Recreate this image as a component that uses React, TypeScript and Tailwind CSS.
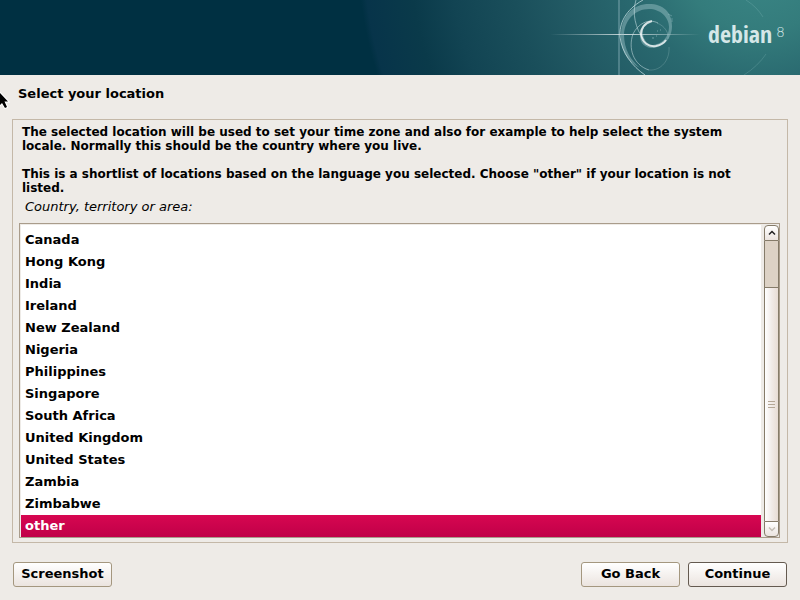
import { useState } from "react";

const locations = [
  "Canada",
  "Hong Kong",
  "India",
  "Ireland",
  "New Zealand",
  "Nigeria",
  "Philippines",
  "Singapore",
  "South Africa",
  "United Kingdom",
  "United States",
  "Zambia",
  "Zimbabwe",
  "other",
];

function Swirl() {
  return (
    <svg
      className="absolute top-0 right-0 h-full w-[500px]"
      viewBox="300 0 500 75"
      fill="none"
    >
      <defs>
        <linearGradient id="flare" x1="550" x2="700" y1="0" y2="0" gradientUnits="userSpaceOnUse">
          <stop offset="0" stopColor="#fff" stopOpacity="0" />
          <stop offset="0.5" stopColor="#fff" stopOpacity="0.75" />
          <stop offset="1" stopColor="#fff" stopOpacity="0" />
        </linearGradient>
      </defs>
      <path d="M619 0V75" stroke="#8fb5bd" strokeOpacity="0.4" strokeWidth="2" />
      <rect x="550" y="34" width="150" height="1" fill="url(#flare)" />
      <path
        d="M621 34C622 14 634 4 649 4C663 4 672 12 672 26C672 38 664 48 651 48C643 47 639 41 640 33C641 26 645 22 651 21C645 24 642 29 643 34C644 41 648 45 653 45C662 44 669 37 669 27C669 17 660 9 649 9C635 9 625 20 624 34C624 50 631 60 640 68C627 61 620 50 621 34Z"
        fill="#a0c6ca"
        fillOpacity="0.45"
      />
      <path d="M668 14l4 2M672 18v4" stroke="#a0c6ca" strokeOpacity="0.4" />
      <path d="M643 0C625 10 619 24 620 37C622 53 632 66 645 75" stroke="#c6dfe2" strokeOpacity="0.75" />
      <path d="M636 0C632 13 635 28 644 40" stroke="#c6dfe2" strokeOpacity="0.6" />
      <path d="M658 23C648 18 638 24 633 34C628 48 633 65 649 70" stroke="#c6dfe2" strokeOpacity="0.55" />
      <path d="M649 70C661 71 670 60 669 47" stroke="#c6dfe2" strokeOpacity="0.2" />
      <path d="M657 23C665 26 669 33 668 39" stroke="#c6dfe2" strokeOpacity="0.25" />
      <path d="M652 21C644 23 641 29 641 34C642 43 649 47 656 46C661 45 664 43 666 40" stroke="#fff" strokeOpacity="0.75" strokeWidth="2" />
      <path d="M652 38h2M657 31h1M660 30h1M656 36h1" stroke="#9fc4c8" strokeOpacity="0.6" />
      <path d="M746 0Q757 7 763 17M744 75Q758 66 766 54" stroke="#8fc4c4" strokeOpacity="0.25" />
    </svg>
  );
}

function Pointer() {
  return (
    <svg className="absolute top-[86px] left-0 h-7 w-6" viewBox="0 0 24 28" aria-hidden="true">
      <path
        d="M-1 6L8 15.5L4.500 15.500L7 21L5 22L2 17L-1 20Z"
        fill="#000"
        stroke="#fff"
        strokeWidth="2"
        paintOrder="stroke"
      />
    </svg>
  );
}

function ScrollBar() {
  return (
    <div className="mt-px flex w-[15px] flex-col">
      <button
        aria-label="Scroll up"
        className="flex h-4 items-center justify-center rounded-t-sm border border-[#857b69] bg-linear-to-b from-white to-[#ebe4df]"
      >
        <svg className="h-2 w-2" viewBox="0 0 8 8" fill="none">
          <path d="M1 5.5L4 2.5L7 5.5" stroke="#222" strokeWidth="1.5" />
        </svg>
      </button>
      <div className="h-[46px] border-x border-[#857b69] bg-[#ddd2c5]" />
      <div className="flex flex-1 flex-col items-center justify-center gap-[2px] border border-b-0 border-[#857b69] bg-linear-to-r from-white via-[#f1ebe8] to-[#e8dcd4]">
        <span className="h-px w-[7px] bg-[#b5a796]" />
        <span className="h-px w-[7px] bg-[#b5a796]" />
        <span className="h-px w-[7px] bg-[#b5a796]" />
      </div>
      <button
        aria-label="Scroll down"
        className="flex h-4 items-center justify-center rounded-b-sm border border-[#857b69] bg-linear-to-b from-white to-[#ebe4df]"
      >
        <svg className="h-2 w-2" viewBox="0 0 8 8" fill="none">
          <path d="M1 2.5L4 5.5L7 2.5" stroke="#c4bdb5" strokeWidth="1.5" />
        </svg>
      </button>
    </div>
  );
}

function App() {
  const [location, setLocation] = useState("other");

  return (
    <div className="relative flex min-h-screen flex-col bg-[#eeebe7] font-['DejaVu_Sans',sans-serif] text-[13px] leading-[14px] font-bold text-black">
      <header className="relative flex h-[75px] items-center justify-end overflow-hidden bg-[#003042] bg-[radial-gradient(circle_at_760px_-48px,#3c8988_0px,#347c7c_80px,#2a6a70_130px,#225a64_200px,#1a4f5b_250px,#124453_310px,#0a3a4a_350px,#07344a_396px,#003042_402px)] pr-[15px]">
        <Swirl />
        <div className="relative flex items-start gap-1 pb-2 text-[#d5e7e8]">
          <span className="font-['Open_Sans_Condensed','Lato',sans-serif] text-[24px] leading-8 font-medium">
            debian
          </span>
          <span className="font-['DejaVu_Sans',sans-serif] text-sm leading-7 font-extralight">8</span>
        </div>
      </header>

      <main className="flex flex-1 flex-col px-3 pt-3 pb-[13px]">
        <h1 className="px-[6px]">Select your location</h1>

        <section className="mt-[18px] flex flex-1 flex-col border border-[#c4b8a8] pt-[5px] pr-[7px] pb-1 pl-[6px]">
          <div className="px-[3px] text-xs leading-[14px]">
            <p>
              The selected location will be used to set your time zone and also for example to help select the system
              <br />
              locale. Normally this should be the country where you live.
            </p>
            <p className="mt-[14px]">
              This is a shortlist of locations based on the language you selected. Choose "other" if your location is
              not
              <br />
              listed.
            </p>
          </div>
          <label htmlFor="location" className="mt-[5px] px-[6px] font-normal italic">
            Country, territory or area:
          </label>

          <div className="mt-[9px] flex flex-1 border border-[#a99c8b] bg-[#eeebe7]">
            <select
              id="location"
              size={14}
              value={location}
              onChange={(e) => setLocation(e.target.value)}
              className="mt-px ml-px mr-[3px] flex-1 overflow-hidden bg-white pt-1 outline-none [scrollbar-width:none]"
            >
              {locations.map((name) => (
                <option
                  key={name}
                  value={name}
                  className="h-[22px] min-h-[22px] px-1 pt-[3px] pb-0 font-bold checked:bg-linear-to-b checked:from-[#d70751] checked:to-[#c00048] checked:[-webkit-text-fill-color:white]"
                >
                  {name}
                </option>
              ))}
            </select>
            <ScrollBar />
          </div>
        </section>

        <footer className="mt-[19px] flex gap-2 px-px">
          <button className="mr-auto h-[25px] w-[99px] rounded-[3px] border border-[#a4977f] bg-linear-to-b from-white to-[#ebe4df] pb-[2px]">
            Screenshot
          </button>
          <button className="h-[25px] w-[99px] rounded-[3px] border border-[#a4977f] bg-linear-to-b from-white to-[#ebe4df] pb-[2px]">
            Go Back
          </button>
          <button className="h-[25px] w-[99px] rounded-[3px] border border-[#645a50] bg-linear-to-b from-white to-[#ebe4df] pb-[2px]">
            Continue
          </button>
        </footer>
      </main>

      <Pointer />
    </div>
  );
}

export default App;
